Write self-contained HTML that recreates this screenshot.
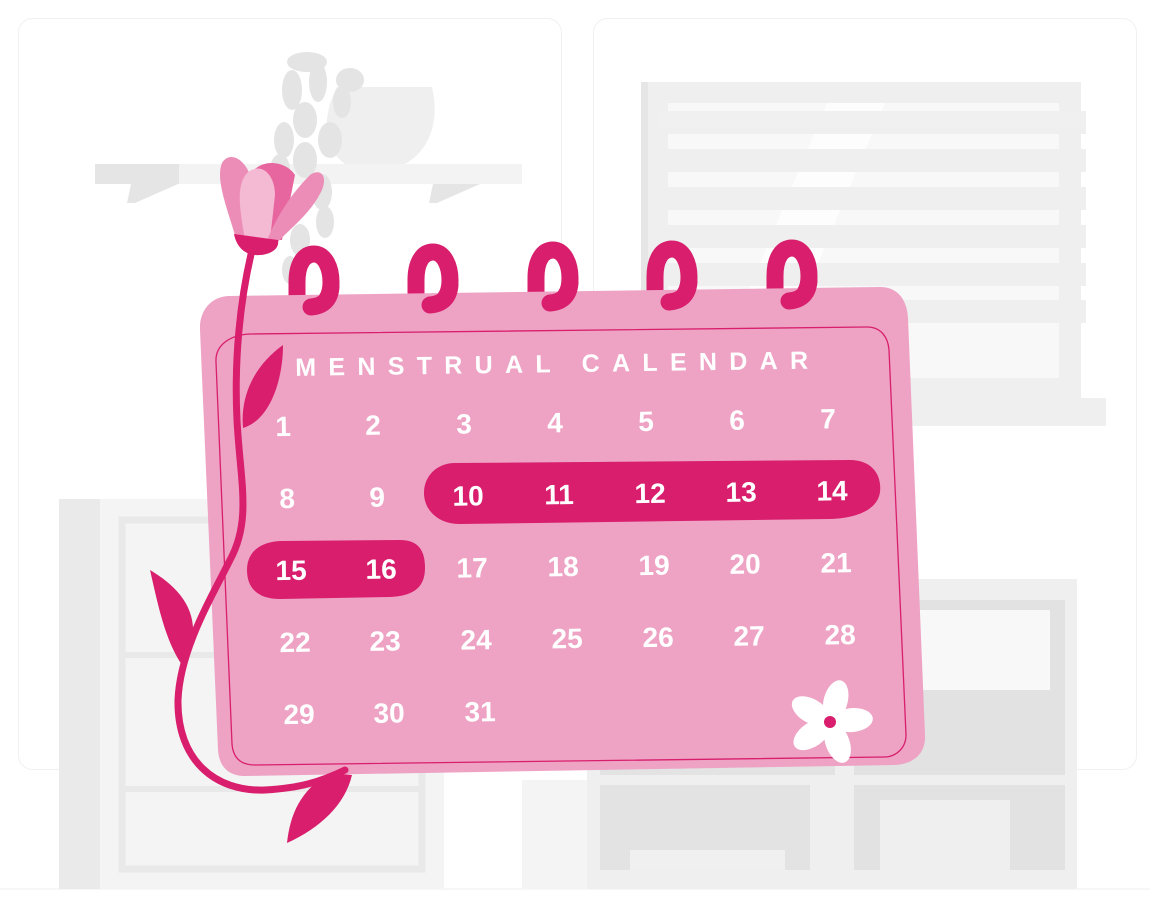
<!DOCTYPE html>
<html><head><meta charset="utf-8"><style>
html,body{margin:0;padding:0;background:#fff;width:1150px;height:903px;overflow:hidden}
svg{display:block}
text{font-family:"Liberation Sans",Arial,sans-serif;font-weight:bold;fill:#fff}
</style></head><body>
<svg width="1150" height="903" viewBox="0 0 1150 903" xmlns="http://www.w3.org/2000/svg">
<defs>
<path id="ring" d="M-16,40 L-16,4 C-16,-14 -9,-24 1,-24 C12,-24 18,-10 18,4 C18,20 10,29 -2,29" fill="none" stroke="#d81e6c" stroke-width="17" stroke-linecap="round"/>
</defs>
<rect x="18.5" y="18.5" width="543" height="751" rx="14" fill="#fff" stroke="#f1f1f3"/>
<rect x="593.5" y="18.5" width="543" height="751" rx="14" fill="#fff" stroke="#f1f1f3"/>
<line x1="0" y1="889" x2="1150" y2="889" stroke="#efeff1"/>
<rect x="641" y="82" width="440" height="316" fill="#efefef"/>
<rect x="641" y="82" width="7" height="316" fill="#e6e6e6"/>
<rect x="668" y="103" width="391" height="275" fill="#f8f8f8"/>
<polygon points="827,103 885,103 770,378 712,378" fill="#fdfdfd"/>
<g fill="#efefef" opacity="0.95">
<rect x="659" y="111" width="427" height="23"/><rect x="659" y="149" width="427" height="23"/>
<rect x="659" y="187" width="427" height="23"/><rect x="659" y="225" width="427" height="23"/>
<rect x="659" y="263" width="427" height="23"/><rect x="659" y="300" width="427" height="23"/>
</g>
<rect x="641" y="398" width="465" height="28" fill="#efefef"/>
<path d="M337,87 L432,87 C440,120 430,150 405,164 L345,164 C325,150 320,120 337,87Z" fill="#efefef"/>
<rect x="95" y="164" width="427" height="20" fill="#f3f3f3"/>
<rect x="95" y="164" width="84" height="20" fill="#e5e5e5"/>
<polygon points="131,184 178,184 135,203 127,203" fill="#e5e5e5"/>
<polygon points="433,184 480,184 437,203 429,203" fill="#e5e5e5"/>
<g fill="#e4e4e4">
<ellipse cx="307" cy="62" rx="20" ry="10"/><ellipse cx="292" cy="90" rx="10" ry="20"/>
<ellipse cx="318" cy="82" rx="9" ry="20"/><ellipse cx="350" cy="80" rx="14" ry="12"/>
<ellipse cx="342" cy="102" rx="9" ry="16"/><ellipse cx="305" cy="120" rx="12" ry="18"/>
<ellipse cx="284" cy="140" rx="10" ry="18"/><ellipse cx="330" cy="140" rx="12" ry="18"/>
<ellipse cx="305" cy="160" rx="12" ry="18"/><ellipse cx="280" cy="170" rx="10" ry="16"/>
<ellipse cx="322" cy="192" rx="10" ry="18"/><ellipse cx="325" cy="222" rx="9" ry="16"/>
<ellipse cx="300" cy="240" rx="10" ry="16"/><ellipse cx="290" cy="270" rx="8" ry="14"/>
</g>
<rect x="59" y="499" width="385" height="390" fill="#f4f4f4"/>
<rect x="59" y="499" width="41" height="390" fill="#eaeaea"/>
<rect x="122" y="520" width="300" height="349" fill="none" stroke="#e9e9e9" stroke-width="7"/>
<rect x="122" y="652" width="300" height="6" fill="#e9e9e9"/>
<rect x="122" y="786" width="300" height="6" fill="#e9e9e9"/>
<rect x="522" y="780" width="555" height="109" fill="#f4f4f4"/>
<rect x="587" y="579" width="490" height="310" fill="#efefef"/>
<rect x="600" y="600" width="440" height="80" fill="#f8f8f8"/>
<rect x="600" y="685" width="235" height="90" fill="#e3e3e3"/>
<rect x="854" y="600" width="211" height="175" fill="#e2e2e2"/>
<rect x="880" y="610" width="170" height="80" fill="#f8f8f8"/>
<rect x="600" y="785" width="210" height="85" fill="#e3e3e3"/>
<rect x="854" y="785" width="211" height="85" fill="#e2e2e2"/>
<rect x="880" y="800" width="130" height="70" fill="#efefef"/>
<rect x="630" y="850" width="155" height="20" fill="#f0f0f0"/>
<use href="#ring" x="313" y="278"/><use href="#ring" x="432" y="276"/><use href="#ring" x="552" y="274"/><use href="#ring" x="671" y="273"/><use href="#ring" x="791" y="272"/>
<path d="M228,296 L880,287 C898,287 907,300 908,318 L925,735 C926,752 915,764 895,765 L245,776 C228,776 219,766 218,750 L200,330 C199,312 210,297 228,296Z" fill="#eea3c4"/>
<path d="M250,334 L867,327 C880,327 888,336 889,350 L906,735 C906,748 896,757 884,757 L255,765 C240,765 233,757 232,744 L216,362 C215,345 230,335 250,334Z" fill="none" stroke="#d81e6c" stroke-width="1.3"/>
<g fill="none" stroke="#d81e6c" stroke-width="17" stroke-linecap="round">
<path d="M331,287 C330,300 323,306 311,307"/>
<path d="M450,285 C449,298 442,304 430,305"/>
<path d="M570,283 C569,296 562,302 550,303"/>
<path d="M689,282 C688,295 681,301 669,302"/>
<path d="M809,281 C808,294 801,300 789,301"/>
</g>
<path d="M455,463 L850,460 C872,460 882,475 880,492 C878,508 860,518 830,519 L460,524 C438,524 424,510 424,493 C424,475 438,463 455,463Z" fill="#d81e6c"/>
<path d="M280,541 L400,540 C418,540 425,550 425,568 C425,590 410,596 390,597 L280,599 C260,599 247,590 247,570 C247,552 260,542 280,541Z" fill="#d81e6c"/>
<g transform="rotate(-0.8 575 560)">
<text x="298" y="372" font-size="25" letter-spacing="12.3">MENSTRUAL CALENDAR</text>
<g font-size="28" text-anchor="middle">
<text x="285" y="432">1</text><text x="375" y="432">2</text><text x="466" y="432">3</text><text x="557" y="432">4</text><text x="648" y="432">5</text><text x="739" y="432">6</text><text x="830" y="432">7</text>
<text x="288" y="504">8</text><text x="378" y="504">9</text><text x="469" y="504">10</text><text x="560" y="504">11</text><text x="651" y="504">12</text><text x="742" y="504">13</text><text x="833" y="504">14</text>
<text x="291" y="576">15</text><text x="381" y="576">16</text><text x="472" y="576">17</text><text x="563" y="576">18</text><text x="654" y="576">19</text><text x="745" y="576">20</text><text x="836" y="576">21</text>
<text x="294" y="648">22</text><text x="384" y="648">23</text><text x="475" y="648">24</text><text x="566" y="648">25</text><text x="657" y="648">26</text><text x="748" y="648">27</text><text x="839" y="648">28</text>
<text x="297" y="720">29</text><text x="387" y="720">30</text><text x="478" y="720">31</text>
</g></g>
<g fill="#fff" transform="translate(830,722)">
<ellipse cx="0" cy="-22" rx="12" ry="21" transform="rotate(15)"/>
<ellipse cx="0" cy="-22" rx="12" ry="21" transform="rotate(85)"/>
<ellipse cx="0" cy="-22" rx="12" ry="21" transform="rotate(160)"/>
<ellipse cx="0" cy="-22" rx="12" ry="21" transform="rotate(235)"/>
<ellipse cx="0" cy="-22" rx="12" ry="21" transform="rotate(300)"/>
</g>
<circle cx="830" cy="722" r="6" fill="#d81e6c"/>
<path d="M252,250 C240,300 234,360 237,420 C240,480 252,520 230,560 C210,600 180,650 178,700 C177,760 215,792 265,790 C300,788 320,782 345,770" fill="none" stroke="#d81e6c" stroke-width="7" stroke-linecap="round"/>
<path d="M283,345 C255,365 240,395 243,428 C270,420 283,380 283,345Z" fill="#d81e6c"/>
<path d="M150,570 C175,585 195,605 193,635 C190,650 185,660 182,665 C165,640 158,605 150,570Z" fill="#d81e6c"/>
<path d="M287,843 C290,815 300,790 330,773 L352,775 C345,805 320,828 287,843Z" fill="#d81e6c"/>
<path d="M237,242 C228,210 215,180 222,163 C230,150 245,160 250,175 L260,238Z" fill="#ec8db7"/>
<path d="M250,175 C260,158 285,160 295,175 L282,240 L255,240Z" fill="#e8669f"/>
<path d="M245,240 C240,210 235,185 248,172 C262,162 275,175 275,195 L270,240Z" fill="#f4b9d3"/>
<path d="M268,238 C280,210 295,190 310,175 C320,168 328,175 322,190 C310,215 290,228 275,245Z" fill="#ec8db7"/>
<path d="M234,234 L278,240 C280,250 268,256 255,255 C243,254 236,245 234,234Z" fill="#d81e6c"/>
</svg>
</body></html>
